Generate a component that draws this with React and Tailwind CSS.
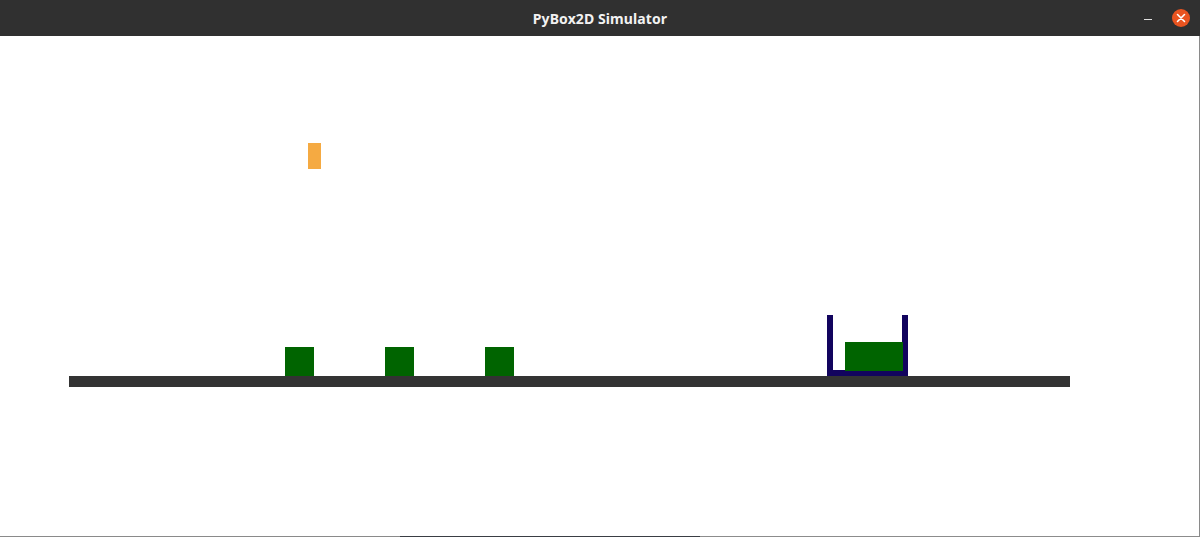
import React from "react";

export default function App() {
  return (
    <div className="w-[1200px] h-[537px] flex flex-col bg-white overflow-hidden" style={{}}>
      <div className="h-[36px] shrink-0 bg-[#303030] flex items-center justify-center relative">
        <span className="text-[14px] font-bold text-[#f2f2f2] font-['Noto_Sans','DejaVu_Sans',sans-serif] tracking-[0.1px]">
          PyBox2D Simulator
        </span>
        <div className="absolute right-[10px] top-0 h-[36px] flex items-center gap-[20px]">
          <div className="w-[8px] h-[1px] bg-[#e0e0e0] mt-[2px]" />
          <div className="w-[18px] h-[18px] rounded-full bg-[#e95420] flex items-center justify-center">
            <svg width="10" height="10" viewBox="0 0 10 10">
              <path d="M1.5 1.5 L8.5 8.5 M8.5 1.5 L1.5 8.5" stroke="white" strokeWidth="1.6" strokeLinecap="round" />
            </svg>
          </div>
        </div>
      </div>
      <div className="flex-1 flex">
        <div className="flex-1 flex flex-col">
          <div className="flex-1 relative bg-white">
            {/* orange body */}
            <div className="absolute left-[308px] top-[107px] w-[13px] h-[26px] bg-[#f5aa42]" />
            {/* green boxes */}
            <div className="absolute left-[285px] top-[311px] w-[29px] h-[29px] bg-[#006400]" />
            <div className="absolute left-[385px] top-[311px] w-[29px] h-[29px] bg-[#006400]" />
            <div className="absolute left-[485px] top-[311px] w-[29px] h-[29px] bg-[#006400]" />
            {/* basket */}
            <div className="absolute left-[827px] top-[279px] w-[6px] h-[61px] bg-[#12045e]" />
            <div className="absolute left-[902px] top-[279px] w-[6px] h-[61px] bg-[#12045e]" />
            <div className="absolute left-[827px] top-[334px] w-[81px] h-[6px] bg-[#12045e]" />
            <div className="absolute left-[845px] top-[306px] w-[58px] h-[29px] bg-[#006400]" />
            {/* ground */}
            <div className="absolute left-[69px] top-[340px] w-[1001px] h-[11px] bg-[#333333]" />
          </div>
          <div className="h-[1px] shrink-0 flex">
            <div className="w-[400px] bg-[#8a8a8a]" />
            <div className="w-[300px] bg-[#3a3e44]" />
            <div className="flex-1 bg-[#8c8c8c]" />
          </div>
        </div>
        <div className="w-[1px] shrink-0 bg-[#8a8a8a]" />
      </div>
    </div>
  );
}
